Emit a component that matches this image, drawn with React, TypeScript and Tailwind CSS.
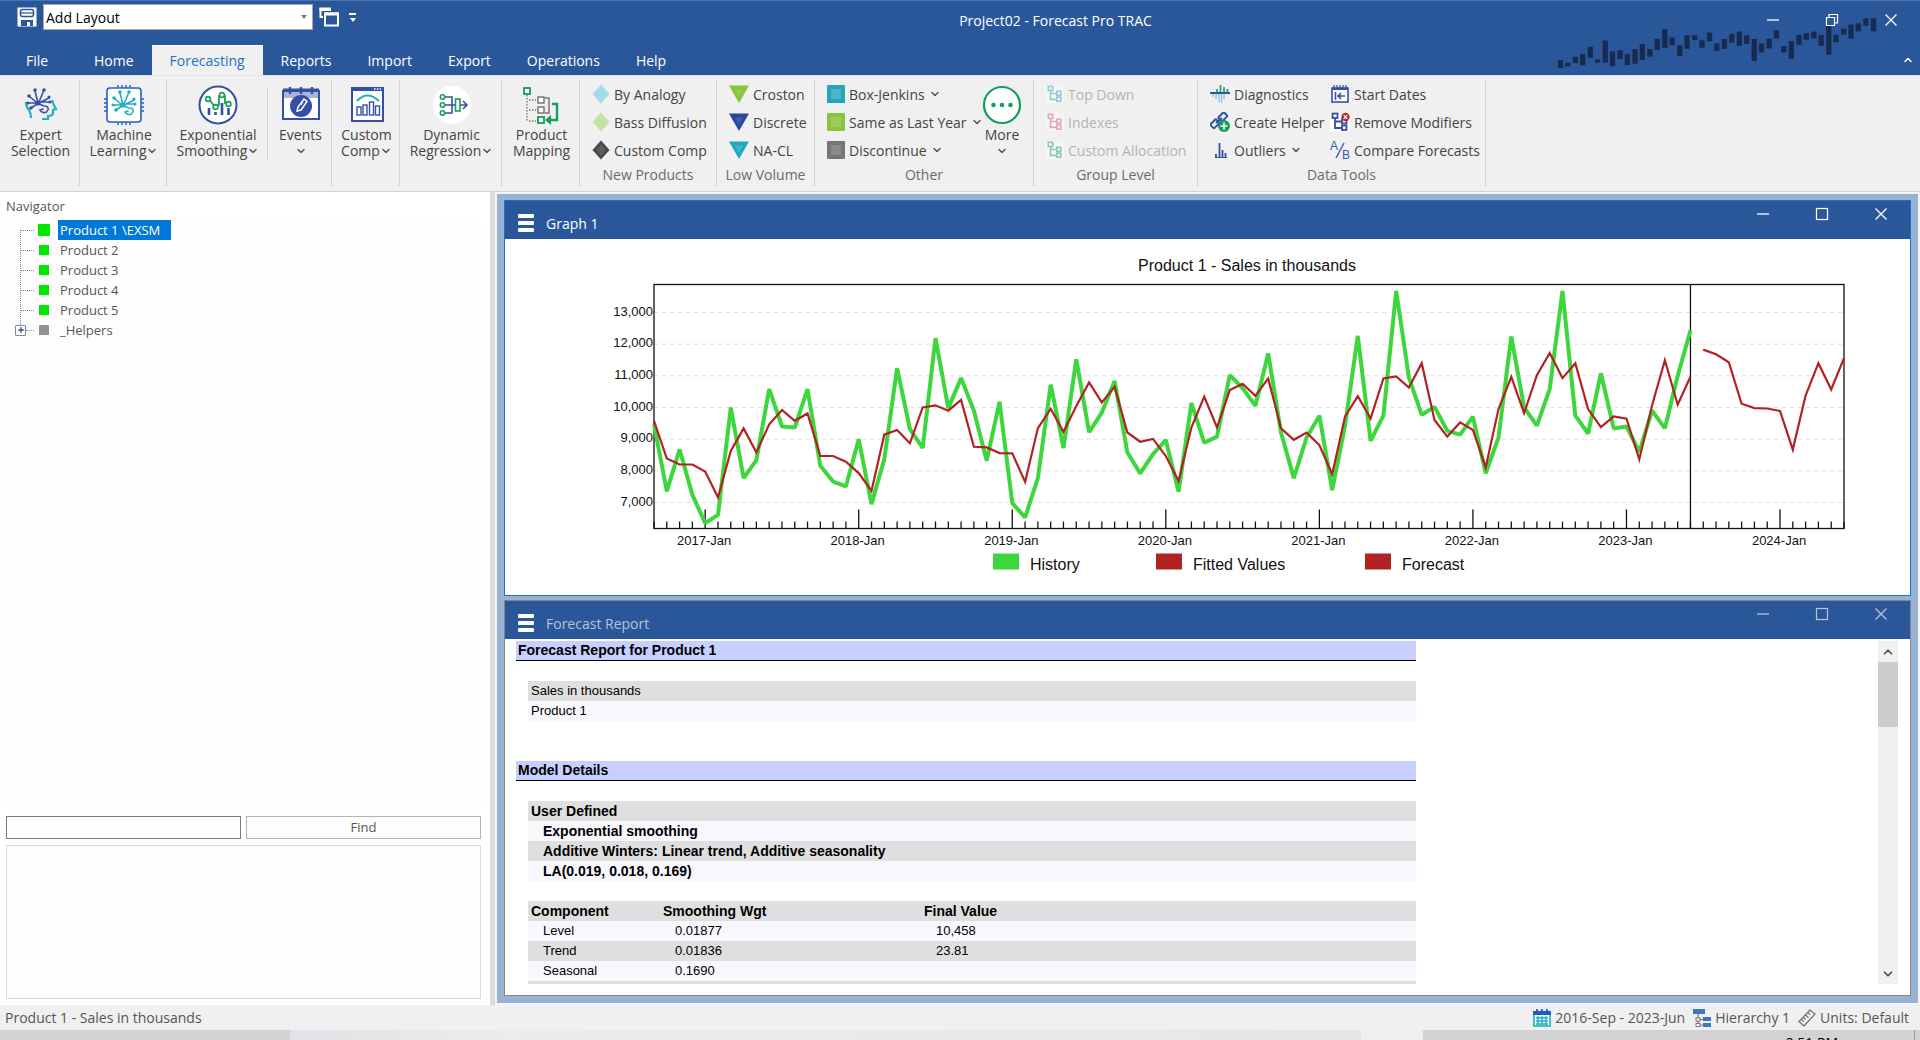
import type { ReactNode } from "react";
import { ChevronDown, ChevronUp, Plus } from "lucide-react";

const BLUE = "#3450a3";
const TEAL = "#1fb0bf";
const GREEN = "#169e5c";

// Monthly sales in tens, starting at 2016-Sep
const HISTORY = [
  947, 735, 868, 724, 635, 661, 1000, 777, 834, 1058, 940, 937, 1058, 816, 766, 751, 900, 695, 837, 1124, 932,
  872, 1219, 998, 1093, 990, 832, 1018, 698, 653, 777, 1072, 872, 1152, 922, 984, 1084, 858, 792, 853, 897, 734,
  1014, 889, 908, 1102, 1061, 1005, 1171, 921, 777, 905, 974, 739, 942, 1226, 895, 974, 1368, 1095, 977, 1002,
  926, 914, 971, 792, 905, 1224, 1000, 943, 1058, 1368, 974, 918, 1108, 934, 940, 860, 990, 934, 1100, 1244,
];

const FITTED = [
  958, 839, 820, 820, 798, 716, 863, 934, 858, 947, 992, 958, 981, 847, 847, 829, 793, 737, 914, 929, 887, 1000,
  1007, 990, 1024, 876, 874, 856, 855, 765, 935, 996, 923, 1005, 1079, 1016, 1065, 921, 892, 901, 847, 768, 937,
  1034, 937, 1055, 1075, 1037, 1092, 934, 898, 921, 881, 789, 971, 1036, 965, 1092, 1098, 1063, 1140, 961, 908,
  953, 929, 811, 995, 1097, 982, 1102, 1172, 1093, 1140, 995, 938, 972, 965, 836, 1007, 1149, 1009, 1098,
];

const FORECAST = [1183, 1168, 1143, 1012, 998, 997, 989, 867, 1038, 1140, 1057, 1156];

const PLOT = { left: 149, right: 1339, top: 45, bottom: 289 };
const MONTHS = 93;

const xAt = (month: number) => PLOT.left + (month * (PLOT.right - PLOT.left)) / MONTHS;
const yAt = (value: number) => 73 + (1300 - value) * 0.3167;

function tracePoints(values: number[], start = 0) {
  return values.map((v, i) => `${xAt(start + i).toFixed(1)},${yAt(v).toFixed(1)}`).join(" ");
}

function Chevron() {
  return <ChevronDown className="h-3 w-3 shrink-0 text-[#555]" strokeWidth={3} />;
}

/* ---------- icons ---------- */

function Neuron({ color, x = 0, y = 0 }: { color: string; x?: number; y?: number }) {
  return (
    <g transform={`translate(${x} ${y})`} stroke={color} fill={color} strokeWidth="1.6" strokeLinecap="round">
      <path
        d="M17 18L14 6M18 17L23 5M18 18L28 13M21 17H29M15 17L8 11M15 18H7M16 19L10 23M18 19L23 21Q28 21 27 25Q25 29 21 27L19 25L22 24"
        fill="none"
      />
      <circle cx="14" cy="5" r="1" />
      <circle cx="23" cy="5" r="1" />
      <circle cx="29" cy="17" r="0.8" />
      <circle cx="8" cy="11" r="1" />
      <circle cx="7" cy="18" r="0.8" />
      <circle cx="10" cy="23" r="1" />
      <circle cx="28" cy="12" r="0.8" />
      <circle cx="17" cy="18" r="1.8" />
    </g>
  );
}

function ExpertIcon() {
  return (
    <svg viewBox="0 0 40 40" className="h-10 w-10">
      <g fill="none" stroke={TEAL} strokeWidth="2.2">
        <path d="M5 17Q5 22 8 25Q10 28 10 33" />
        <path d="M31 15Q32 19 35 24L32 25V28Q32 31 27 31V34H21" />
      </g>
      <Neuron color={BLUE} />
    </svg>
  );
}

function MachineIcon() {
  return (
    <svg viewBox="0 0 40 40" className="h-10 w-10">
      <path
        d="M14 0V4M18 0V4M22 0V4M26 0V4M14 36V40M18 36V40M22 36V40M26 36V40M0 14H4M0 18H4M0 22H4M0 26H4M36 14H40M36 18H40M36 22H40M36 26H40"
        stroke="#2263c4"
        strokeWidth="1.4"
      />
      <rect x="3" y="3" width="34" height="34" rx="3" fill="#fff" stroke="#2263c4" strokeWidth="1.6" />
      <Neuron color={TEAL} x={2} y={2} />
    </svg>
  );
}

function SmoothingIcon() {
  return (
    <svg viewBox="0 0 40 40" className="h-10 w-10">
      <circle cx="20" cy="20" r="18.5" fill="#fff" stroke={BLUE} strokeWidth="2" />
      <path d="M11 23V30M17.500 27V30M24 18V30M30.500 23V30" stroke={BLUE} strokeWidth="2.6" />
      <path d="M11 14L17 22L21 20V11Q24 8 27 11V18L30 19" fill="none" stroke={GREEN} strokeWidth="1.8" />
      <g fill="#fff" stroke={GREEN} strokeWidth="1.6">
        <circle cx="10" cy="14" r="2.4" />
        <circle cx="17.500" cy="22" r="2.4" />
        <circle cx="24" cy="10" r="2.4" />
        <circle cx="30.500" cy="19" r="2.4" />
      </g>
    </svg>
  );
}

function EventsIcon() {
  return (
    <svg viewBox="0 0 40 40" className="h-10 w-10">
      <rect x="2" y="6" width="36" height="28" fill="#fff" stroke={BLUE} strokeWidth="2" />
      <rect x="3" y="7" width="34" height="6" fill="#a9b4d9" />
      <path d="M2 5H38" stroke={BLUE} strokeWidth="3" />
      <path d="M9 2V9M20 2V9M31 2V9" stroke={BLUE} strokeWidth="2.4" />
      <circle cx="20" cy="21" r="11" fill={BLUE} />
      <path d="M16 26L17 22L23 14L26 16.500L20 25Z" fill={BLUE} stroke="#fff" strokeWidth="1.5" />
      <path d="M20 20L22 17" stroke="#fff" strokeWidth="1" />
    </svg>
  );
}

function CustomCompIcon() {
  return (
    <svg viewBox="0 0 40 40" className="h-10 w-10">
      <rect x="5" y="3" width="31" height="33" fill="#fff" stroke={BLUE} strokeWidth="2" />
      <rect x="5" y="2" width="31" height="4" fill={BLUE} />
      <path d="M27 4H34" stroke="#fff" strokeWidth="1.400" strokeDasharray="1.600 1.200" />
      <path d="M10 16Q20 5 32 16" fill="none" stroke={TEAL} strokeWidth="2" />
      <g fill="#fff" stroke={BLUE} strokeWidth="1.400">
        <rect x="10" y="22" width="4" height="8" />
        <rect x="16" y="20" width="4" height="10" />
        <rect x="22.500" y="17" width="4" height="13" />
        <rect x="28.500" y="21" width="4" height="9" />
      </g>
    </svg>
  );
}

function RegressionIcon() {
  return (
    <svg viewBox="0 0 40 40" className="h-10 w-10">
      <circle cx="20" cy="20" r="19" fill="#fff" />
      <g fill="none" stroke={BLUE} strokeWidth="1.600">
        <path d="M13 12H20V28H13M13 20H23M27 20H35M31 16L35 20L31 24" />
      </g>
      <g fill="#fff" stroke={GREEN} strokeWidth="1.600">
        <circle cx="10.500" cy="12" r="2.200" />
        <circle cx="10.500" cy="20" r="2.200" />
        <circle cx="10.500" cy="28" r="2.200" />
        <rect x="23.500" y="14" width="4.500" height="12" />
      </g>
    </svg>
  );
}

function MappingIcon() {
  return (
    <svg viewBox="0 0 40 40" className="h-10 w-10">
      <path d="M5 10V36M7 15H14M7 25H14M7 36H14" stroke="#777" strokeWidth="1.400" strokeDasharray="1.500 1.500" />
      <g fill="#fff" stroke="#777" strokeWidth="1.500">
        <path d="M23 13H27V28H23" fill="none" />
        <rect x="16" y="12" width="6" height="6" />
        <rect x="16" y="22" width="6" height="6" />
      </g>
      <g fill="#fff" stroke={GREEN} strokeWidth="1.800">
        <rect x="2" y="3" width="6" height="6" />
        <rect x="16" y="32" width="6" height="6" />
      </g>
      <path d="M30 19H35V35H27" fill="none" stroke={GREEN} strokeWidth="2.400" />
      <path d="M29 30V40L23 35Z" fill={GREEN} />
    </svg>
  );
}

function MoreIcon() {
  return (
    <svg viewBox="0 0 40 40" className="h-10 w-10">
      <circle cx="20" cy="20" r="18" fill="#fff" stroke={GREEN} strokeWidth="2.200" />
      <circle cx="11.500" cy="20" r="2.300" fill={GREEN} />
      <circle cx="20" cy="20" r="2.300" fill={GREEN} />
      <circle cx="28.500" cy="20" r="2.300" fill={GREEN} />
    </svg>
  );
}

function Diamond({ fill, edge }: { fill: string; edge: string }) {
  return (
    <svg viewBox="0 0 18 20" className="h-5 w-[18px] shrink-0">
      <path d="M9 0.500L17.500 10L9 19.500L0.500 10Z" fill={edge} />
      <path d="M9 4L14 10L9 16L4 10Z" fill={fill} />
    </svg>
  );
}

function Triangle({ fill, inner }: { fill: string; inner: string }) {
  return (
    <svg viewBox="0 0 20 18" className="h-[18px] w-5 shrink-0">
      <path d="M0 0.500H20L10 18Z" fill={fill} />
      <path d="M6 4.500H14L10 11.500Z" fill={inner} />
    </svg>
  );
}

function Square({ fill, inner }: { fill: string; inner: string }) {
  return (
    <svg viewBox="0 0 18 18" className="h-[18px] w-[18px] shrink-0">
      <rect width="18" height="18" rx="1" fill={fill} />
      <rect x="4" y="4" width="10" height="10" fill={inner} />
    </svg>
  );
}

function TreeBoxes({ color, remove }: { color: string; remove?: boolean }) {
  return (
    <svg viewBox="0 0 20 20" className={remove ? "h-5 w-5 shrink-0 bg-white" : "h-[18px] w-[18px] shrink-0 bg-white"}>
      <g fill="#fff" stroke={color} strokeWidth="1.800">
        <path d="M5 6V16H12M5 9.500H12" fill="none" />
        <rect x="2.500" y="1.500" width="5" height="4.500" />
        <rect x="12" y="7" width="4.500" height="4.500" />
        <rect x="12" y="13.500" width="4.500" height="4.500" />
      </g>
      {remove && (
        <>
          <circle cx="15.500" cy="5" r="4.200" fill="#c0272d" />
          <path d="M13.700 3.200L17.300 6.800M17.300 3.200L13.700 6.800" stroke="#fff" strokeWidth="1.200" />
        </>
      )}
    </svg>
  );
}

function DiagnosticsIcon() {
  return (
    <svg viewBox="0 0 20 20" className="h-5 w-5 shrink-0">
      <path d="M7 8V5M10.500 8V1M14 8V3M17.500 8V5" stroke={GREEN} strokeWidth="1.600" />
      <path d="M3 10V13M6 10V15M9 10V18M11.500 10V19M14 10V15" stroke="#7fc9d8" strokeWidth="1.300" />
      <path d="M0 9H20" stroke={BLUE} strokeWidth="2" />
    </svg>
  );
}

function HelperIcon() {
  return (
    <svg viewBox="0 0 20 20" className="h-5 w-5 shrink-0">
      <g fill="none" stroke={BLUE} strokeWidth="2">
        <rect x="9" y="2" width="8" height="5.500" rx="1" transform="rotate(-45 13 5)" />
        <rect x="1" y="9" width="8" height="5.500" rx="1" transform="rotate(-45 5 12)" />
        <path d="M6 11L12 6" />
      </g>
      <circle cx="14" cy="14" r="6" fill={GREEN} />
      <path d="M14 10.500V17.500M10.500 14H17.500" stroke="#fff" strokeWidth="1.600" />
    </svg>
  );
}

function OutliersIcon() {
  return (
    <svg viewBox="0 0 20 20" className="h-5 w-5 shrink-0">
      <path d="M6 17V14M9.500 17V3M12.500 17V10M15.500 17V13" stroke={BLUE} strokeWidth="1.800" />
      <path d="M5 17.500H17" stroke={BLUE} strokeWidth="1" />
    </svg>
  );
}

function StartDatesIcon() {
  return (
    <svg viewBox="0 0 20 20" className="h-5 w-5 shrink-0">
      <rect x="2" y="4" width="16" height="14" fill="#fff" stroke={BLUE} strokeWidth="1.600" />
      <path d="M3 5H17" stroke={BLUE} strokeWidth="2" />
      <path d="M4 1V5M7 1V5M10 1V5M13 1V5M16 1V5" stroke={BLUE} strokeWidth="1.200" />
      <path d="M5.500 8V16M8 12H15M11 9L8 12L11 15" fill="none" stroke={BLUE} strokeWidth="1.600" />
    </svg>
  );
}

function CompareIcon() {
  return (
    <svg viewBox="0 0 20 20" className="h-5 w-5 shrink-0 overflow-visible text-[#3f5aad]">
      <text x="0" y="10" fontSize="12" fill="currentColor" fontFamily="Liberation Sans, sans-serif">A</text>
      <text x="12" y="19" fontSize="12" fill="currentColor" fontFamily="Liberation Sans, sans-serif">B</text>
      <path d="M14 3L6 18" stroke="currentColor" strokeWidth="1.400" />
    </svg>
  );
}

/* ---------- ribbon ---------- */

function BigButton({ icon, lines, arrow }: { icon: ReactNode; lines: string[]; arrow?: boolean }) {
  return (
    <button className="flex flex-1 flex-col items-center pt-[5px] pl-[2px] leading-4">
      {icon}
      <span className="mt-[2px]">{lines[0]}</span>
      <span className="flex h-4 items-center">
        {lines[1]}
        {arrow && <Chevron />}
      </span>
    </button>
  );
}

function SmallButton({ icon, label, arrow, disabled }: { icon: ReactNode; label: string; arrow?: boolean; disabled?: boolean }) {
  return (
    <button disabled={disabled} className="flex h-7 items-center gap-1 disabled:text-[#b4b4b4]">
      <span className={disabled ? "opacity-45" : ""}>{icon}</span>
      <span>{label}</span>
      {arrow && <Chevron />}
    </button>
  );
}

function RibbonGroup({ className, caption, children }: { className: string; caption?: string; children: ReactNode }) {
  return (
    <section className={`mt-1 mb-[5px] flex shrink-0 flex-col border-r border-[#d2d2d2] ${className}`}>
      <div className="flex flex-1 items-start">{children}</div>
      {caption && <h2 className="h-[22px] text-center leading-[22px] text-[#6b6b6b]">{caption}</h2>}
    </section>
  );
}

function Ribbon() {
  return (
    <div className="flex h-[116px] overflow-hidden border-t border-[#dfe5ee] bg-[#f0f0f0] text-[14px] whitespace-nowrap text-[#444]">
      <RibbonGroup className="w-20">
        <BigButton icon={<ExpertIcon />} lines={["Expert", "Selection"]} />
      </RibbonGroup>
      <RibbonGroup className="w-[87px]">
        <BigButton icon={<MachineIcon />} lines={["Machine", "Learning"]} arrow />
      </RibbonGroup>
      <RibbonGroup className="w-[165px]">
        <div className="flex w-[100px]">
          <BigButton icon={<SmoothingIcon />} lines={["Exponential", "Smoothing"]} arrow />
        </div>
        <div className="mt-2 h-[72px] w-px bg-[#d2d2d2]" />
        <BigButton icon={<EventsIcon />} lines={["Events", ""]} arrow />
      </RibbonGroup>
      <RibbonGroup className="w-[68px]">
        <BigButton icon={<CustomCompIcon />} lines={["Custom", "Comp"]} arrow />
      </RibbonGroup>
      <RibbonGroup className="w-[102px]">
        <BigButton icon={<RegressionIcon />} lines={["Dynamic", "Regression"]} arrow />
      </RibbonGroup>
      <RibbonGroup className="w-[78px]">
        <BigButton icon={<MappingIcon />} lines={["Product", "Mapping"]} />
      </RibbonGroup>
      <RibbonGroup className="w-[137px]" caption="New Products">
        <div className="pl-3">
          <SmallButton icon={<Diamond fill="#9fdbe9" edge="#a5dcea" />} label="By Analogy" />
          <SmallButton icon={<Diamond fill="#c3e2a2" edge="#c5e3a8" />} label="Bass Diffusion" />
          <SmallButton icon={<Diamond fill="#5e5c5e" edge="#464547" />} label="Custom Comp" />
        </div>
      </RibbonGroup>
      <RibbonGroup className="w-[98px]" caption="Low Volume">
        <div className="pl-3">
          <SmallButton icon={<Triangle fill="#8ac43f" inner="#97cb55" />} label="Croston" />
          <SmallButton icon={<Triangle fill="#2b479d" inner="#4459a8" />} label="Discrete" />
          <SmallButton icon={<Triangle fill="#20a9bd" inner="#4db3c4" />} label="NA-CL" />
        </div>
      </RibbonGroup>
      <RibbonGroup className="w-[219px]" caption="Other">
        <div className="w-[154px] pl-3">
          <SmallButton icon={<Square fill="#21a7ba" inner="#4fb3c3" />} label="Box-Jenkins" arrow />
          <SmallButton icon={<Square fill="#8ac43f" inner="#9ccc5e" />} label="Same as Last Year" arrow />
          <SmallButton icon={<Square fill="#757575" inner="#8b8b8b" />} label="Discontinue" arrow />
        </div>
        <BigButton icon={<MoreIcon />} lines={["More", ""]} arrow />
      </RibbonGroup>
      <RibbonGroup className="w-[164px]" caption="Group Level">
        <div className="pl-3">
          <SmallButton icon={<TreeBoxes color="#1fa3b5" />} label="Top Down" disabled />
          <SmallButton icon={<TreeBoxes color="#d9536a" />} label="Indexes" disabled />
          <SmallButton icon={<TreeBoxes color={GREEN} />} label="Custom Allocation" disabled />
        </div>
      </RibbonGroup>
      <RibbonGroup className="w-[288px]" caption="Data Tools">
        <div className="w-[132px] pl-3">
          <SmallButton icon={<DiagnosticsIcon />} label="Diagnostics" />
          <SmallButton icon={<HelperIcon />} label="Create Helper" />
          <SmallButton icon={<OutliersIcon />} label="Outliers" arrow />
        </div>
        <div>
          <SmallButton icon={<StartDatesIcon />} label="Start Dates" />
          <SmallButton icon={<TreeBoxes color={BLUE} remove />} label="Remove Modifiers" />
          <SmallButton icon={<CompareIcon />} label="Compare Forecasts" />
        </div>
      </RibbonGroup>
    </div>
  );
}

/* ---------- title bar ---------- */

// x, top, bottom of each bar in the banner artwork
const BANNER = [
  [240, 180, 204], [262, 188, 199], [285, 170, 189], [307, 162, 196], [330, 140, 173], [352, 178, 188],
  [375, 121, 188], [397, 154, 199], [420, 150, 177], [442, 162, 195], [465, 147, 191], [487, 131, 180],
  [510, 147, 170], [532, 116, 150], [555, 87, 143], [577, 112, 135], [600, 135, 168], [622, 105, 146],
  [645, 105, 120], [667, 120, 143], [690, 97, 123], [712, 130, 153], [735, 116, 146], [757, 101, 127],
  [780, 94, 137], [802, 105, 131], [825, 116, 183], [847, 130, 157], [870, 116, 145], [892, 90, 115],
  [914, 138, 157], [937, 123, 176], [960, 104, 134], [982, 99, 119], [1005, 94, 115], [1027, 104, 137],
  [1050, 75, 164], [1072, 103, 126], [1095, 85, 103], [1117, 73, 115], [1139, 69, 93], [1162, 54, 77],
  [1185, 54, 93],
];

const TABS = ["Home", "Forecasting", "Reports", "Import", "Export", "Operations", "Help"];

function WindowButtons({ restore, className = "" }: { restore?: boolean; className?: string }) {
  return (
    <div className={`flex ${className}`}>
      <button aria-label="Minimize" className="flex w-[59px] justify-center">
        <svg viewBox="0 0 14 14" className="h-[14px] w-[14px]">
          <path d="M1 7H13" stroke="currentColor" strokeWidth="1.300" />
        </svg>
      </button>
      <button aria-label="Maximize" className="flex w-[59px] justify-center">
        <svg viewBox="0 0 14 14" className="h-[14px] w-[14px]" fill="none" stroke="currentColor" strokeWidth="1.200">
          {restore ? <path d="M1.500 4.500H9.500V12.500H1.500ZM4 4V1.500H12.500V10H10" /> : <rect x="1.500" y="1.500" width="11" height="11" />}
        </svg>
      </button>
      <button aria-label="Close" className="flex w-[59px] justify-center">
        <svg viewBox="0 0 14 14" className="h-[14px] w-[14px]">
          <path d="M1.500 1.500L12.500 12.500M12.500 1.500L1.500 12.500" stroke="currentColor" strokeWidth="1.300" />
        </svg>
      </button>
    </div>
  );
}

function TitleBar() {
  return (
    <header className="relative h-[75px] border-t border-[#4a72ae] bg-[#2a579a] text-white">
      <svg viewBox="230 50 965 160" className="absolute top-4 right-[42px] h-[53px] w-[322px]">
        {BANNER.map(([x, top, bottom]) => (
          <rect key={x} x={x - 8} y={top} width="16" height={bottom - top} fill="#172b50" />
        ))}
      </svg>
      <div className="relative flex h-11 items-start">
        <div className="flex items-center gap-[6px] pt-[3px] pl-[17px]">
          <button aria-label="Save">
            <svg viewBox="0 0 20 20" className="h-5 w-5">
              <rect x="0.500" y="0.500" width="19" height="19" fill="#fff" />
              <rect x="3.500" y="2.500" width="13" height="7" rx="2" fill="none" stroke="#2a579a" strokeWidth="1.600" />
              <path d="M4 6H16" stroke="#2a579a" strokeWidth="1.200" />
              <path d="M4 19V13H16V19H13V15H10V19Z" fill="#2a579a" />
            </svg>
          </button>
          <div className="relative h-[26px] w-[270px]">
            <select
              aria-label="Layout"
              className="h-full w-full appearance-none border border-[#a8a8a8] bg-white pl-[2px] text-[14px] text-black"
            >
              <option>Add Layout</option>
            </select>
            <span className="pointer-events-none absolute top-[11px] right-[6px] border-x-[3px] border-t-[4px] border-x-transparent border-t-[#777]" />
          </div>
          <button aria-label="Switch windows">
            <svg viewBox="0 0 20 20" className="h-5 w-5" fill="none" stroke="#fff">
              <path d="M4 10H1.500V1.500H11V4" strokeWidth="2" />
              <path d="M0.500 2.500H12" strokeWidth="3" />
              <path d="M6 6.500H19V18.500H6Z" strokeWidth="2" />
              <path d="M5 7H20" strokeWidth="3" />
            </svg>
          </button>
          <button aria-label="Customize toolbar" className="ml-1 flex flex-col items-center gap-[3px]">
            <span className="h-[2px] w-[7px] bg-white" />
            <span className="border-x-[3px] border-t-[4px] border-x-transparent border-t-white" />
          </button>
        </div>
        <h1 className="flex-1 pt-[10px] pl-3 text-center text-[14px] leading-5">Project02 - Forecast Pro TRAC</h1>
        <WindowButtons restore className="mt-3" />
      </div>
      <nav className="relative flex h-[30px] items-stretch text-[14px]">
        <button className="mr-[2px] w-[74px]">File</button>
        {TABS.map((tab) => (
          <button
            key={tab}
            className={tab === "Forecasting" ? "w-[111px] border-t border-white bg-[#f0f0f0] text-[#2272c8]" : "px-[18px]"}
          >
            {tab}
          </button>
        ))}
        <button aria-label="Collapse ribbon" className="mr-[6px] ml-auto self-center">
          <ChevronUp className="h-3 w-3" strokeWidth={3} />
        </button>
      </nav>
    </header>
  );
}

/* ---------- navigator ---------- */

function Navigator() {
  const rows = ["Product 1 \\EXSM", "Product 2", "Product 3", "Product 4", "Product 5", "_Helpers"];

  return (
    <aside className="flex w-[490px] shrink-0 flex-col bg-white pr-[9px] pb-[6px] pl-[6px] text-[13px] text-[#555]">
      <h2 className="h-7 pt-1 leading-5">Navigator</h2>
      <ul className="relative flex-1 bg-[#fdfdfd]">
        <li aria-hidden className="absolute top-[10px] left-[14px] h-[95px] border-l border-dotted border-[#888]" />
        {rows.map((label, i) => {
          const helpers = label === "_Helpers";
          return (
            <li key={label} className="flex h-5 items-center pl-[9px]">
              {helpers ? (
                <button
                  aria-label="Expand helpers"
                  className="flex h-[11px] w-[11px] items-center justify-center rounded-[1px] border border-[#8a8a8a] bg-white"
                >
                  <Plus className="h-2 w-2 text-[#2b4fa0]" strokeWidth={4} />
                </button>
              ) : (
                <span className="w-[6px]" />
              )}
              <span className={`border-t border-dotted border-[#888] ${helpers ? "w-2" : "w-[13px]"}`} />
              <span className="ml-[2px] flex w-[16px] justify-center">
                <span
                  className={
                    helpers ? "h-[10px] w-[10px] bg-[#929292]" : i === 0 ? "h-3 w-3 bg-[#00e800]" : "h-[10px] w-[10px] bg-[#00e800]"
                  }
                />
              </span>
              <span className={`ml-[6px] px-[2px] leading-5 ${i === 0 ? "bg-[#0078d7] pr-[11px] text-white" : ""}`}>{label}</span>
            </li>
          );
        })}
      </ul>
      <div className="mt-[7px] grid h-[23px] grid-cols-2 gap-[5px]">
        <input aria-label="Find text" className="w-full border border-[#7a7a7a] bg-[#fdfdfd]" />
        <button className="border border-[#b5b5b5] bg-[#fdfdfd]">Find</button>
      </div>
      <div className="mt-[6px] h-[154px] border border-[#dadada] bg-[#fdfdfd]" />
    </aside>
  );
}

/* ---------- child windows ---------- */

function ChildWindow({ title, active, className, children }: { title: string; active?: boolean; className: string; children: ReactNode }) {
  return (
    <section className={`flex min-h-0 flex-col border bg-white ${active ? "border-[#1f6fd0]" : "border-[#858585]"} ${className}`}>
      <div className={`flex h-[38px] shrink-0 bg-[#2a579a] ${active ? "text-white" : "text-[#b9c3d6]"}`}>
        <button aria-label="Window menu" className="ml-[13px] flex w-4 flex-col gap-[3px] pt-[13px]">
          <span className="h-[4px] w-full rounded-[1px] bg-white" />
          <span className="h-[4px] w-full rounded-[1px] bg-white" />
          <span className="h-[4px] w-full rounded-[1px] bg-white" />
        </button>
        <h2 className="ml-3 flex-1 pt-[13px] text-[14px] leading-5">{title}</h2>
        <WindowButtons className="mt-[6px] items-start" />
      </div>
      {children}
    </section>
  );
}

function SalesChart() {
  const ticks = Array.from({ length: MONTHS + 1 }, (_, i) => i);
  const legend = [
    { label: "History", color: "#3dd63d", x: 488 },
    { label: "Fitted Values", color: "#b22222", x: 651 },
    { label: "Forecast", color: "#b22222", x: 860 },
  ];

  return (
    <svg viewBox="0 0 1405 355" className="min-h-0 w-full flex-1" fontFamily="Liberation Sans, Arial, sans-serif" fill="#111">
      <text x="742" y="31" fontSize="16" textAnchor="middle">
        Product 1 - Sales in thousands
      </text>
      {[13, 12, 11, 10, 9, 8, 7].map((k) => (
        <g key={k}>
          <line x1={PLOT.left} x2={PLOT.right} y1={yAt(k * 100)} y2={yAt(k * 100)} stroke="#e2e2e2" strokeDasharray="5 3" />
          <text x="148" y={yAt(k * 100) + 3} fontSize="13" textAnchor="end">
            {k},000
          </text>
        </g>
      ))}
      {ticks.map((i) => (
        <line key={i} x1={xAt(i)} x2={xAt(i)} y1={i % 12 === 4 ? 270 : 282} y2={PLOT.bottom} stroke="#111" strokeWidth="1.300" />
      ))}
      {[2017, 2018, 2019, 2020, 2021, 2022, 2023, 2024].map((year, i) => (
        <text key={year} x={xAt(4 + i * 12) - 1} y="305" fontSize="13" textAnchor="middle">
          {year}-Jan
        </text>
      ))}
      <rect
        x={PLOT.left}
        y={PLOT.top}
        width={PLOT.right - PLOT.left}
        height={PLOT.bottom - PLOT.top}
        fill="none"
        stroke="#111"
        strokeWidth="1.300"
      />
      <line x1={xAt(81)} x2={xAt(81)} y1={PLOT.top} y2={PLOT.bottom} stroke="#111" strokeWidth="1.300" />
      <polyline points={tracePoints(HISTORY)} fill="none" stroke="#3dd63d" strokeWidth="4" strokeLinejoin="bevel" />
      <polyline points={tracePoints(FITTED)} fill="none" stroke="#b22222" strokeWidth="2.200" />
      <polyline points={tracePoints(FORECAST, 82)} fill="none" stroke="#b22222" strokeWidth="2.200" />
      {legend.map(({ label, color, x }) => (
        <g key={label}>
          <rect x={x} y="314" width="26" height="16" fill={color} />
          <text x={x + 37} y="330" fontSize="16">
            {label}
          </text>
        </g>
      ))}
    </svg>
  );
}

function SectionTitle({ children }: { children: ReactNode }) {
  return <h3 className="h-5 border-b border-black bg-[#c7cffe] pl-[2px] text-[14px] leading-[19px] font-bold">{children}</h3>;
}

const COMPONENTS = [
  ["Level", "0.01877", "10,458"],
  ["Trend", "0.01836", "23.81"],
  ["Seasonal", "0.1690", ""],
];

function ForecastReport() {
  return (
    <div className="flex min-h-0 flex-1 pt-[2px] pr-3 pb-[11px] pl-[11px] font-['Liberation_Sans',Arial,sans-serif] text-black">
      <div className="flex-1 overflow-hidden">
        <div className="w-[900px] text-[13px] leading-5">
          <SectionTitle>Forecast Report for Product 1</SectionTitle>
          <div className="mt-5 mb-10 ml-3">
            <p className="bg-[#dfdfdf] pl-[3px]">Sales in thousands</p>
            <p className="bg-[#f7f7fd] pl-[3px]">Product 1</p>
          </div>
          <SectionTitle>Model Details</SectionTitle>
          <div className="mt-5 ml-3 text-[14px] font-bold">
            <p className="bg-[#dfdfdf] pl-[3px]">User Defined</p>
            <p className="bg-[#f7f7fd] pl-[15px]">Exponential smoothing</p>
            <p className="bg-[#dfdfdf] pl-[15px]">Additive Winters: Linear trend, Additive seasonality</p>
            <p className="bg-[#f7f7fd] pl-[15px]">LA(0.019, 0.018, 0.169)</p>
          </div>
          <table className="mt-5 ml-3 w-[888px] table-fixed text-left">
            <thead>
              <tr className="bg-[#dfdfdf] text-[14px] leading-5">
                <th className="w-[132px] pl-[3px]">Component</th>
                <th className="w-[261px] pl-[3px]">Smoothing Wgt</th>
                <th className="pl-[3px]">Final Value</th>
              </tr>
            </thead>
            <tbody>
              {COMPONENTS.map((row) => (
                <tr key={row[0]} className="bg-[#f7f7fd] even:bg-[#dfdfdf]">
                  {row.map((cell, i) => (
                    <td key={i} className="pl-[15px]">
                      {cell}
                    </td>
                  ))}
                </tr>
              ))}
            </tbody>
          </table>
          <div className="ml-3 h-5 bg-[#dfdfdf]" />
        </div>
      </div>
      <div className="flex w-5 flex-col items-center bg-[#f0f0f0] text-[#505050]">
        <button aria-label="Scroll up" className="flex h-[21px] items-center">
          <ChevronUp className="h-[14px] w-[14px]" strokeWidth={3} />
        </button>
        <div className="h-[65px] w-full bg-[#cdcdcd]" />
        <button aria-label="Scroll down" className="mt-auto flex h-[21px] items-center">
          <ChevronDown className="h-[14px] w-[14px]" strokeWidth={3} />
        </button>
      </div>
    </div>
  );
}

/* ---------- status bar ---------- */

function StatusBar() {
  return (
    <footer className="flex h-[25px] items-center bg-[#f0f0f0] pr-[11px] pl-[5px] text-[14px] text-[#555]">
      <span className="flex-1">Product 1 - Sales in thousands</span>
      <svg viewBox="0 0 18 18" className="mr-1 h-[18px] w-[18px]">
        <rect x="1" y="3" width="16" height="14" fill="#fff" stroke="#18b0c2" strokeWidth="1.600" />
        <path d="M0 4H18" stroke="#1c5ec0" strokeWidth="4" />
        <path d="M4 0V4M9 0V4M14 0V4" stroke="#1c5ec0" strokeWidth="1.800" />
        <path d="M3 9H15M3 12H15M3 15H15M5 7V16M9 7V16M13 7V16" stroke="#18b0c2" strokeWidth="1.300" />
      </svg>
      <span className="mr-2">2016-Sep - 2023-Jun</span>
      <svg viewBox="0 0 18 18" className="mr-1 h-[18px] w-[18px]">
        <path d="M5 5V16H11M5 10.500H11" fill="none" stroke="#777" strokeWidth="1.200" />
        <rect x="0" y="0" width="12" height="5" fill="#3f78bd" />
        <rect x="10" y="8" width="8" height="4" fill="#3f78bd" />
        <rect x="10" y="14" width="8" height="4" fill="#3f78bd" />
        <rect x="3" y="9" width="4" height="3" fill="#fff" stroke="#777" />
        <rect x="3" y="14.500" width="4" height="3" fill="#fff" stroke="#777" />
      </svg>
      <span className="mr-2">Hierarchy 1</span>
      <svg viewBox="0 0 18 18" className="mr-1 h-[18px] w-[18px]" fill="none" stroke="#777" strokeWidth="1.300">
        <path d="M12 1L17 5L6 17L1 12.500Z" />
        <path d="M10 3.500L12 5.500M7.500 6L10.500 8.500M5.500 8.500L7.500 10.500M3.500 10.500L5.500 12.500" />
      </svg>
      <span>Units: Default</span>
    </footer>
  );
}

export default function App() {
  return (
    <div className="flex h-screen flex-col overflow-hidden bg-[#f0f0f0] font-['Open_Sans','Noto_Sans',sans-serif]">
      <TitleBar />
      <Ribbon />
      <main className="flex min-h-0 flex-1 border-t border-[#d3d3d3]">
        <Navigator />
        <div className="w-[5px] bg-[#dcdcdc]" />
        <div className="flex min-h-0 flex-1 flex-col border-2 border-[#f4f4f4] bg-[#98b2d4] p-[7px] pt-[6px]">
          <ChildWindow title="Graph 1" active className="flex-1">
            <SalesChart />
          </ChildWindow>
          <ChildWindow title="Forecast Report" className="mt-1 flex-1">
            <ForecastReport />
          </ChildWindow>
        </div>
      </main>
      <StatusBar />
      <div className="flex h-[10px] overflow-hidden">
        <div className="w-[290px] bg-[#d4d4d4]" />
        <div className="flex-1 bg-linear-to-r from-[#dfe2e7] via-[#ececec] via-20% to-[#e4e6ea]" />
        <div className="w-[62px] bg-[#efefef]" />
        <div className="flex w-[497px] justify-end bg-[#d2d2d2]">
          <time className="pt-[3px] text-[14px] leading-5 text-black">2:51 PM</time>
          <span className="mr-[5px] ml-[76px] w-px bg-[#999]" />
        </div>
      </div>
    </div>
  );
}
